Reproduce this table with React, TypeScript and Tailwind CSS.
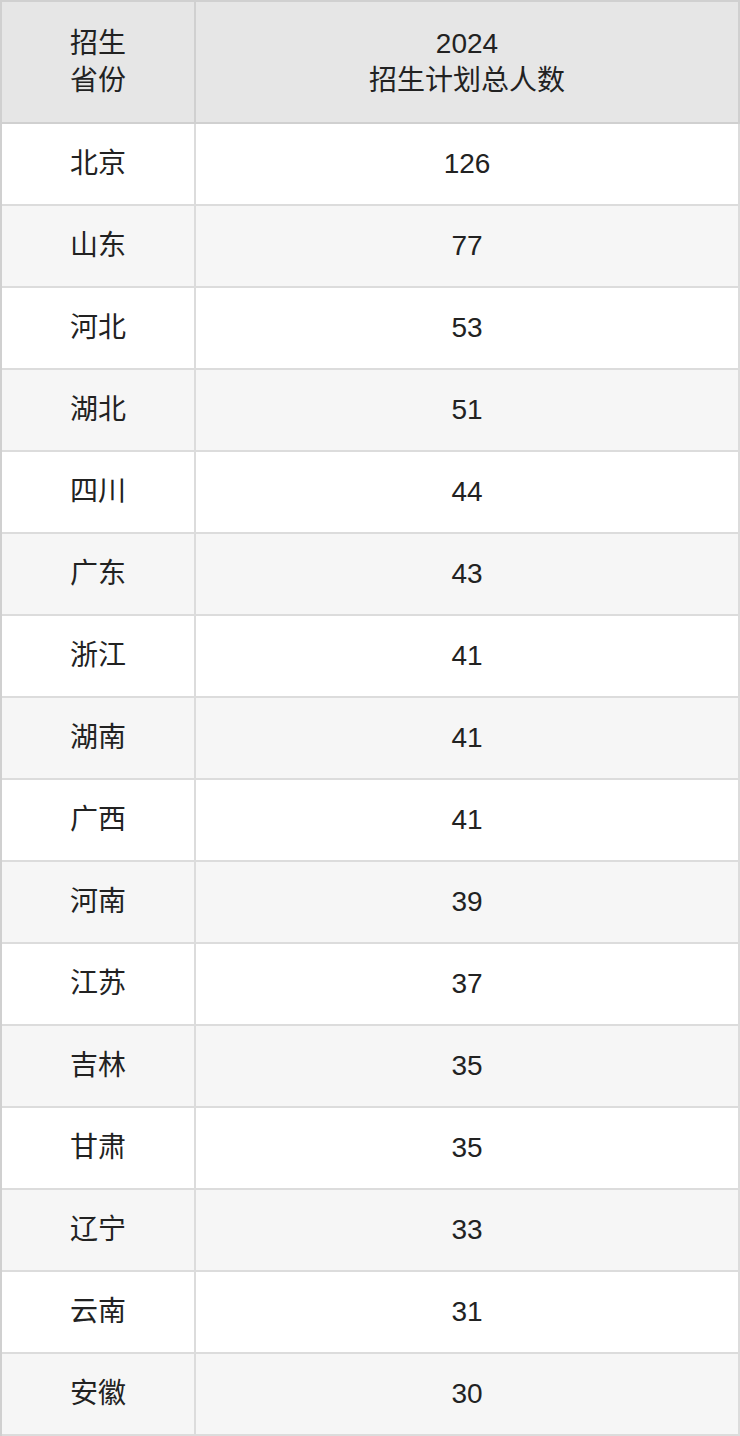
import React from "react";

const rows: [string, string][] = [
  ["北京", "126"],
  ["山东", "77"],
  ["河北", "53"],
  ["湖北", "51"],
  ["四川", "44"],
  ["广东", "43"],
  ["浙江", "41"],
  ["湖南", "41"],
  ["广西", "41"],
  ["河南", "39"],
  ["江苏", "37"],
  ["吉林", "35"],
  ["甘肃", "35"],
  ["辽宁", "33"],
  ["云南", "31"],
  ["安徽", "30"],
];

export default function App() {
  return (
    <div
      className="w-[740px] bg-white text-[#222222] text-[28px]"
      style={{ fontFamily: '"Liberation Sans", "Noto Sans CJK SC", sans-serif' }}
    >
      <div className="border-l-2 border-t-2 border-[#d0d0d0]">
        <div className="flex bg-[#e6e6e6]">
          <div className="w-[194px] h-[122px] border-r-2 border-b-2 border-[#d0d0d0] flex flex-col items-center justify-center leading-[37px]">
            <div>招生</div>
            <div>省份</div>
          </div>
          <div className="w-[544px] h-[122px] border-r-2 border-b-2 border-[#d0d0d0] flex flex-col items-center justify-center leading-[37px]">
            <div>2024</div>
            <div>招生计划总人数</div>
          </div>
        </div>
        {rows.map(([p, n], i) => (
          <div key={p} className={`flex ${i % 2 === 1 ? "bg-[#f6f6f6]" : "bg-white"}`}>
            <div className="w-[194px] h-[82px] border-r-2 border-b-2 border-[#dcdcdc] flex items-center justify-center">
              {p}
            </div>
            <div className="w-[544px] h-[82px] border-r-2 border-b-2 border-[#dcdcdc] flex items-center justify-center">
              {n}
            </div>
          </div>
        ))}
      </div>
    </div>
  );
}
